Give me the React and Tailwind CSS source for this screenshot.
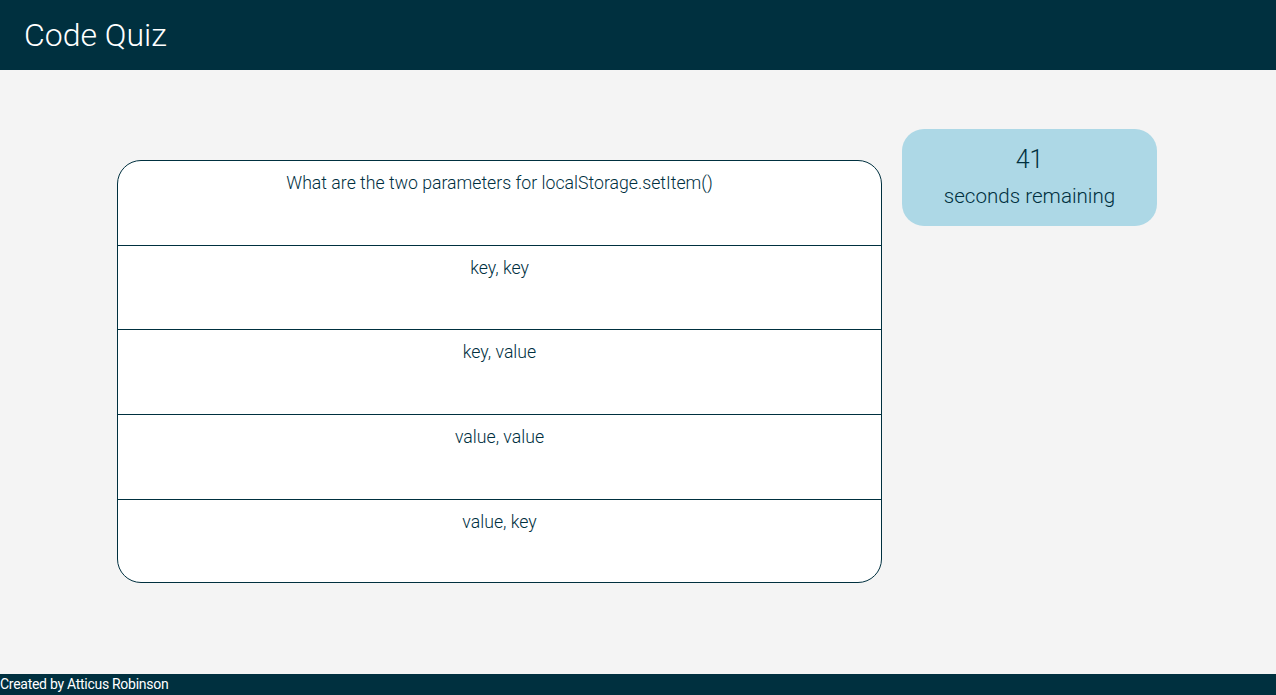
export default function App() {
  const rows = [
    { t: "What are the two parameters for localStorage.setItem()", h: "h-[85px] border-b" },
    { t: "key, key", h: "h-[84px] border-b" },
    { t: "key, value", h: "h-[85px] border-b" },
    { t: "value, value", h: "h-[85px] border-b" },
    { t: "value, key", h: "h-[82px]" },
  ];
  return (
    <div className="flex h-[695px] w-[1276px] flex-col bg-[#f4f4f4] font-['Roboto',sans-serif] text-[#00303f]">
      <header className="flex h-[70px] shrink-0 items-center bg-[#00303f] pl-[24px] pr-[1px]">
        <h1 className="text-[32px] font-light text-white">Code Quiz</h1>
      </header>
      <main className="flex flex-1 items-start pl-[117px] pt-[59px]">
        <div className="mt-[31px] w-[765px] overflow-hidden rounded-[24px] border border-[#00303f] bg-white">
          {rows.map((r) => (
            <div
              key={r.t}
              className={`${r.h} border-[#00303f] pt-[9px] text-center text-[17.7px] font-light`}
            >
              {r.t}
            </div>
          ))}
        </div>
        <div className="ml-[20px] flex h-[97px] w-[255px] flex-col items-center justify-start rounded-[22px] bg-[#add8e6] pt-[15px] font-light">
          <div className="text-[25px] leading-[32px]">41</div>
          <div className="mt-[7px] text-[20.6px] leading-[26px]">seconds remaining</div>
        </div>
      </main>
      <footer className="flex h-[21px] shrink-0 items-center bg-[#00303f]">
        <span className="text-[14px] tracking-[-0.02em] text-white">Created by Atticus Robinson</span>
      </footer>
    </div>
  );
}
